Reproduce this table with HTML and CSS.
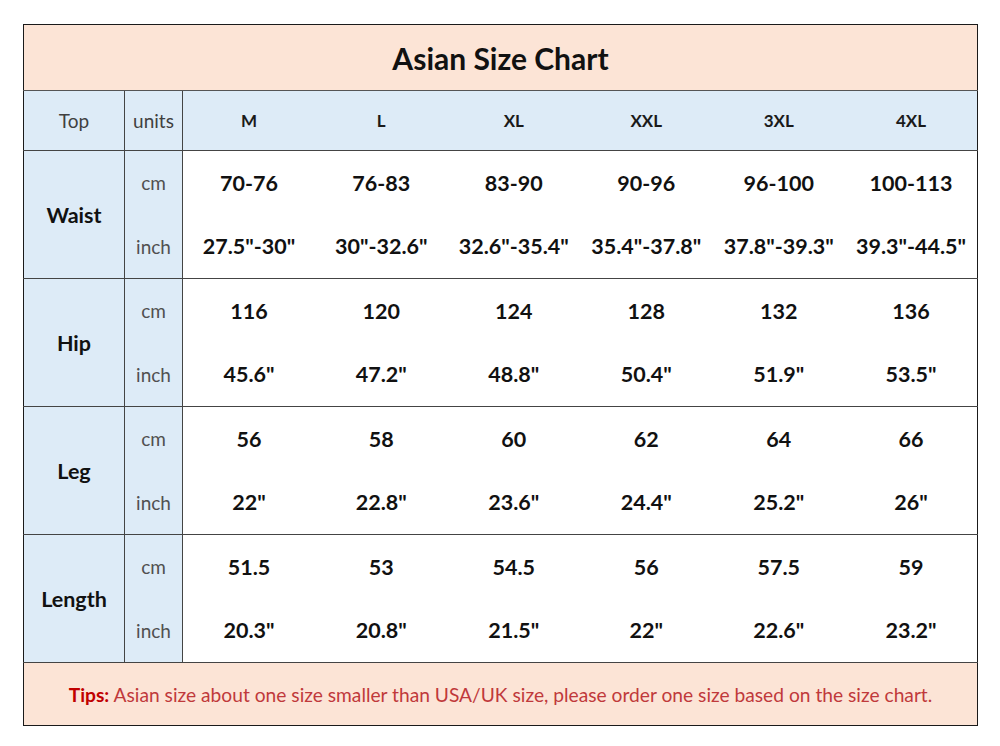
FILE: index.html
```html
<!DOCTYPE html>
<html>
<head>
<meta charset="utf-8">
<link rel="stylesheet" href="styles.css">
</head>
<body>
<table class="chart">
  <colgroup>
    <col class="c-top"><col class="c-unit">
    <col class="c-size"><col class="c-size"><col class="c-size"><col class="c-size"><col class="c-size"><col class="c-size">
  </colgroup>
  <tr class="title-row"><td colspan="8" class="title">Asian Size Chart</td></tr>
  <tr class="head-row">
    <td class="h-top">Top</td><td class="h-unit">units</td>
    <td class="h-size">M</td><td class="h-size">L</td><td class="h-size">XL</td><td class="h-size">XXL</td><td class="h-size">3XL</td><td class="h-size">4XL</td>
  </tr>

  <tr class="sub first">
    <td rowspan="2" class="label">Waist</td><td class="unit">cm</td>
    <td class="val">70-76</td><td class="val">76-83</td><td class="val">83-90</td><td class="val">90-96</td><td class="val">96-100</td><td class="val">100-113</td>
  </tr>
  <tr class="sub second">
    <td class="unit">inch</td>
    <td class="val">27.5"-30"</td><td class="val">30"-32.6"</td><td class="val">32.6"-35.4"</td><td class="val">35.4"-37.8"</td><td class="val">37.8"-39.3"</td><td class="val">39.3"-44.5"</td>
  </tr>

  <tr class="sub first">
    <td rowspan="2" class="label">Hip</td><td class="unit">cm</td>
    <td class="val">116</td><td class="val">120</td><td class="val">124</td><td class="val">128</td><td class="val">132</td><td class="val">136</td>
  </tr>
  <tr class="sub second">
    <td class="unit">inch</td>
    <td class="val">45.6"</td><td class="val">47.2"</td><td class="val">48.8"</td><td class="val">50.4"</td><td class="val">51.9"</td><td class="val">53.5"</td>
  </tr>

  <tr class="sub first">
    <td rowspan="2" class="label">Leg</td><td class="unit">cm</td>
    <td class="val">56</td><td class="val">58</td><td class="val">60</td><td class="val">62</td><td class="val">64</td><td class="val">66</td>
  </tr>
  <tr class="sub second">
    <td class="unit">inch</td>
    <td class="val">22"</td><td class="val">22.8"</td><td class="val">23.6"</td><td class="val">24.4"</td><td class="val">25.2"</td><td class="val">26"</td>
  </tr>

  <tr class="sub first">
    <td rowspan="2" class="label">Length</td><td class="unit">cm</td>
    <td class="val">51.5</td><td class="val">53</td><td class="val">54.5</td><td class="val">56</td><td class="val">57.5</td><td class="val">59</td>
  </tr>
  <tr class="sub second">
    <td class="unit">inch</td>
    <td class="val">20.3"</td><td class="val">20.8"</td><td class="val">21.5"</td><td class="val">22"</td><td class="val">22.6"</td><td class="val">23.2"</td>
  </tr>

  <tr class="tips-row"><td colspan="8" class="tips"><b>Tips:</b> Asian size about one size smaller than USA/UK size, please order one size based on the size chart.</td></tr>
</table>
</body>
</html>
```

FILE: styles.css
```css
html, body {
  margin: 0;
  padding: 0;
  background: #ffffff;
}
body {
  padding: 24px 0 0 23px;
  font-family: Lato, "Open Sans", sans-serif;
  color: #111;
}
.chart {
  border-collapse: collapse;
  table-layout: fixed;
  width: 955px;
  border: 1px solid #1a1a1a;
}
.c-top { width: 101px; }
.c-unit { width: 58px; }
.chart td {
  padding: 0;
  text-align: center;
  vertical-align: middle;
}
.title-row td { height: 65px; }
.title {
  background: #fce4d6;
  font-size: 30px;
  font-weight: 700;
  color: #111;
  border-bottom: 1px solid #555;
}
.head-row td {
  height: 59px;
  background: #ddebf7;
  border-bottom: 1px solid #444;
}
.h-top, .h-unit {
  font-size: 19px;
  color: #404040;
  border-right: 1px solid #444;
}
.h-size {
  font-size: 17px;
  font-weight: 700;
  color: #1a1a1a;
}
.sub td { height: 63.5px; }
.sub.second td { border-bottom: 1px solid #444; }
.label {
  background: #ddebf7;
  font-size: 21.5px;
  font-weight: 700;
  color: #111;
  border-right: 1px solid #444;
  border-bottom: 1px solid #444;
}
.unit {
  background: #ddebf7;
  font-size: 19px;
  color: #505050;
  border-right: 1px solid #444;
}
.val {
  font-size: 21.5px;
  font-weight: 700;
  color: #111;
}
.tips-row td { height: 62px; }
.tips {
  background: #fce4d6;
  font-size: 19.2px;
  color: #c0393b;
}
.tips b {
  color: #c00000;
  font-weight: 700;
}
```
